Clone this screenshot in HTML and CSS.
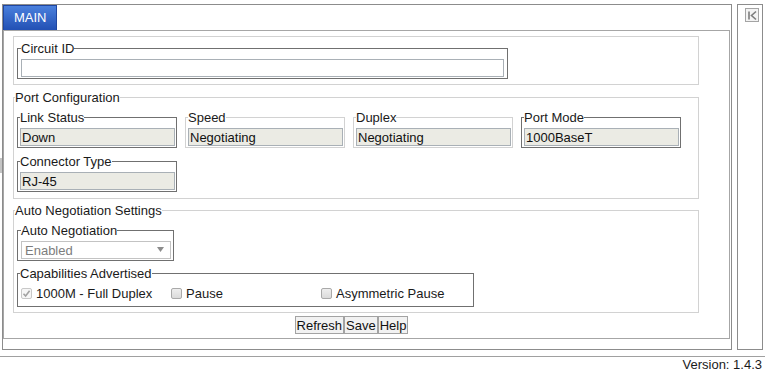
FILE: index.html
```html
<!DOCTYPE html>
<html lang="en">
<head>
  <meta charset="UTF-8">
  <title>Port Settings</title>
  <link rel="stylesheet" href="styles.css">
</head>
<body>
  <div class="grip"></div>

  <div class="page">
    <!-- main frame with tab -->
    <div class="frame">
      <div class="tabs">
        <span class="tab">MAIN</span>
      </div>

      <div class="panel">
        <!-- CIRCUIT ID -->
        <div class="group first">
          <fieldset class="field dark circuit">
            <legend>Circuit ID</legend>
            <input type="text" class="text edit">
          </fieldset>
        </div>

        <!-- PORT CONFIGURATION -->
        <fieldset class="group ports">
          <legend>Port Configuration</legend>
          <div class="fields">
            <fieldset class="field dark">
              <legend>Link Status</legend>
              <input type="text" class="text" value="Down" readonly>
            </fieldset>
            <fieldset class="field light">
              <legend>Speed</legend>
              <input type="text" class="text" value="Negotiating" readonly>
            </fieldset>
            <fieldset class="field light">
              <legend>Duplex</legend>
              <input type="text" class="text" value="Negotiating" readonly>
            </fieldset>
            <fieldset class="field dark">
              <legend>Port Mode</legend>
              <input type="text" class="text" value="1000BaseT" readonly>
            </fieldset>
            <fieldset class="field dark">
              <legend>Connector Type</legend>
              <input type="text" class="text" value="RJ-45" readonly>
            </fieldset>
          </div>
        </fieldset>

        <!-- AUTO NEGOTIATION -->
        <fieldset class="group auto">
          <legend>Auto Negotiation Settings</legend>
          <div class="stack">
            <fieldset class="field dark autoneg">
              <legend>Auto Negotiation</legend>
              <div class="select-wrap">
                <select class="select" disabled>
                  <option>Enabled</option>
                </select>
                <svg class="arrow" width="7" height="5" viewBox="0 0 7 5">
                  <polygon points="0,0 7,0 3.5,5" fill="#8c8c8c"/>
                </svg>
              </div>
            </fieldset>
            <fieldset class="field dark caps">
              <legend>Capabilities Advertised</legend>
              <div class="checks">
                <label class="check">
                  <span class="box on">
                    <svg width="9" height="9" viewBox="0 0 9 9">
                      <polyline points="1.5,4.8 3.6,7 7.6,1.8" fill="none" stroke="#a2a2a2" stroke-width="1.6"/>
                    </svg>
                  </span>
                  1000M - Full Duplex
                </label>
                <label class="check"><span class="box"></span>Pause</label>
                <label class="check"><span class="box"></span>Asymmetric Pause</label>
              </div>
            </fieldset>
          </div>
        </fieldset>

        <div class="buttons">
          <button type="button">Refresh</button>
          <button type="button">Save</button>
          <button type="button">Help</button>
        </div>
      </div>
    </div>

    <!-- collapsed side panel -->
    <div class="side">
      <button class="collapse" type="button" title="Collapse">
        <svg width="11" height="11" viewBox="0 0 11 11" fill="none" stroke="#7c7c7c" stroke-width="1.6">
          <line x1="2" y1="1.5" x2="2" y2="9.5"/>
          <polyline points="9,1.5 4.5,5.5 9,9.5"/>
        </svg>
      </button>
    </div>
  </div>

  <div class="footer">Version: 1.4.3</div>
</body>
</html>
```

FILE: styles.css
```css
* {
  box-sizing: border-box;
}

body {
  margin: 0;
  font: 13px/15px "Liberation Sans", Arial, sans-serif;
  color: #1a1a1a;
  background: #fff;
}

.grip {
  position: absolute;
  left: 0;
  top: 158px;
  width: 2px;
  height: 15px;
  background: #c4c4c4;
}

.page {
  display: flex;
  align-items: flex-start;
  gap: 5px;
  padding: 4px 0 0 2px;
}

.frame {
  width: 730px;
  height: 346px;
  border: 1px solid #8c8c8c;
}

.tabs {
  display: flex;
  height: 25px;
}

.tab {
  height: 25px;
  padding: 0 9px 0 10px;
  border: 1px solid #1f46a0;
  border-bottom: 0;
  background: linear-gradient(#4a80dd, #2250b4);
  color: #fff;
  line-height: 24px;
}

.panel {
  height: 309px;
  margin-right: 1px;
  border: 1px solid #a6a6a6;
  padding: 5px 0 0 9px;
}

/* outer light boxes */
.group {
  width: 686px;
  min-width: 0;
  margin: 0;
  border: 1px solid #d2d2d2;
}

.group > legend {
  padding: 0;
}

.group.first {
  padding: 4px 0 5px 3px;
  margin-bottom: 5px;
}

.group.ports {
  padding: 5px 0 6px 1px;
  margin-bottom: 4px;
}

.group.auto {
  padding: 5px 0 5px 1px;
}

/* inner boxes */
.field {
  min-width: 0;
  margin: 0;
  padding: 3px 1px 1px 2px;
  border: 1px solid #707070;
}

.field legend {
  padding: 0;
}

.field.light {
  border-color: #d2d2d2;
}

.field.circuit {
  width: 491px;
  padding: 3px 3px 1px 3px;
}

.fields {
  display: flex;
  flex-wrap: wrap;
  gap: 6px 8px;
  margin-left: 2px;
}

.fields .field {
  width: 160px;
}

.stack {
  display: flex;
  flex-direction: column;
  align-items: flex-start;
  gap: 5px;
  margin-left: 2px;
}

.field.autoneg {
  width: 157px;
  padding: 3px 2px 1px 3px;
}

.field.caps {
  width: 457px;
  padding: 3px 2px 3px 2px;
}

.text {
  display: block;
  width: 100%;
  height: 18px;
  margin: 0;
  padding: 0 1px;
  border: 1px solid #a9b0b6;
  background: #ebebe4;
  font: inherit;
  color: #111;
  outline: none;
}

.text.edit {
  background: #fff;
}

.select-wrap {
  position: relative;
}

.select {
  display: block;
  width: 100%;
  height: 18px;
  margin: 0;
  padding: 0 3px;
  border: 1px solid #c3c3c3;
  border-radius: 0;
  background: #fff;
  font: inherit;
  color: #7d7d7d;
  appearance: none;
  -webkit-appearance: none;
  opacity: 1;
}

.arrow {
  position: absolute;
  right: 7px;
  top: 6px;
}

.checks {
  display: grid;
  grid-template-columns: 150px 150px 150px;
  height: 19px;
  align-items: center;
}

.check {
  display: flex;
  align-items: center;
  white-space: nowrap;
}

.box {
  width: 11px;
  height: 11px;
  margin: 0 4px 0 1px;
  border: 1px solid #a9a9a9;
  border-radius: 2px;
  background: linear-gradient(#eeeeee, #dadada);
}

.box.on {
  display: flex;
  align-items: center;
  justify-content: center;
  border-color: #c8c8c8;
  background: #f6f6f6;
}

.buttons {
  display: flex;
  justify-content: center;
  width: 686px;
  padding-right: 9px;
  margin-top: 3px;
}

.buttons button {
  height: 18px;
  margin: 0;
  padding: 0 1px;
  border: 1px solid #a3a3a3;
  border-radius: 0;
  background: #f2f2f2;
  font: inherit;
  line-height: 15px;
  color: #111;
}

.side {
  width: 26px;
  height: 346px;
  border: 1px solid #8c8c8c;
  padding: 3px 0 0 7px;
}

.collapse {
  display: flex;
  align-items: center;
  justify-content: center;
  width: 14px;
  height: 14px;
  padding: 0;
  border: 1px solid #a4a4a4;
  border-radius: 0;
  background: #f3f3f3;
}

.footer {
  margin-top: 6px;
  border-top: 1px solid #a0a0a0;
  padding-right: 3px;
  text-align: right;
}
```
